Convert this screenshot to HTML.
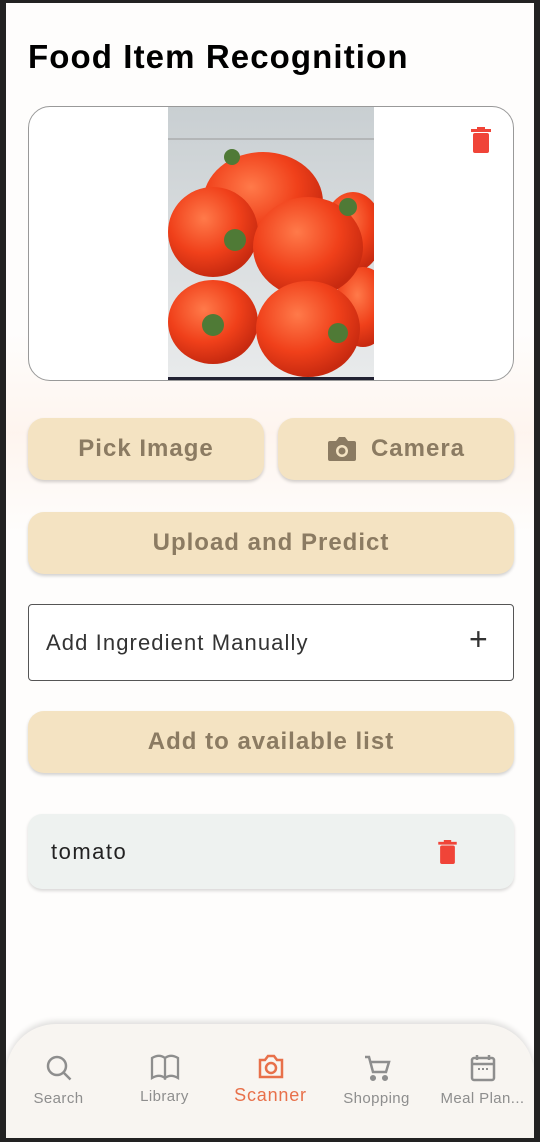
<!DOCTYPE html>
<html><head><meta charset="utf-8"><style>
*{margin:0;padding:0;box-sizing:border-box}
body{width:540px;height:1142px;background:#222;position:relative;overflow:hidden;font-family:"Liberation Sans",sans-serif}
.scr{position:absolute;left:6px;top:3px;width:528px;height:1135px;background:#fefdfc;overflow:hidden}
.abs{position:absolute}
h1{position:absolute;left:22px;top:35px;font-size:33px;font-weight:bold;color:#000;letter-spacing:1.1px;white-space:nowrap}
.btn{position:absolute;background:#f4e3c2;border-radius:16px;box-shadow:0 2px 3px rgba(0,0,0,.18);color:#8b7b62;font-weight:bold;font-size:24px;letter-spacing:1px;display:flex;align-items:center;justify-content:center}
.nav{position:absolute;left:0;top:1021px;width:528px;height:120px;background:#f8f5f1;border-radius:50px 50px 0 0;box-shadow:0 -3px 6px rgba(0,0,0,.12)}
.it{position:absolute;top:0;width:105px;text-align:center;color:#8e8e8e;font-size:15px;letter-spacing:.4px;white-space:nowrap}
.it svg{display:block;margin:30px auto 0}
.it span{display:block;margin-top:8px}
</style></head><body>
<div class="scr">
<div class="abs" style="left:0;top:330px;width:528px;height:200px;background:linear-gradient(180deg,rgba(255,240,225,0) 0%,rgba(253,236,225,.5) 50%,rgba(255,240,225,0) 100%)"></div>
<h1>Food Item Recognition</h1>
<div class="abs" style="left:22px;top:103px;width:486px;height:275px;border:1.5px solid #999;border-radius:22px;overflow:hidden;background:#fff">
 <svg class="abs" style="left:139px;top:0" width="206" height="275" viewBox="0 0 206 275">
  <defs><radialGradient id="t" cx=".4" cy=".35" r=".65"><stop offset="0" stop-color="#ff7a4a"/><stop offset=".6" stop-color="#f0401a"/><stop offset="1" stop-color="#c82a10"/></radialGradient>
  <linearGradient id="bg" x1="0" y1="0" x2="0" y2="1"><stop offset="0" stop-color="#c9cfd2"/><stop offset="1" stop-color="#e9ebec"/></linearGradient></defs>
  <rect width="206" height="275" fill="url(#bg)"/>
  <line x1="0" y1="32" x2="206" y2="32" stroke="#999" stroke-width="1"/>
  <ellipse cx="95" cy="95" rx="60" ry="50" fill="url(#t)"/>
  <ellipse cx="185" cy="125" rx="30" ry="40" fill="url(#t)"/>
  <ellipse cx="195" cy="200" rx="28" ry="40" fill="url(#t)"/>
  <ellipse cx="45" cy="125" rx="45" ry="45" fill="url(#t)"/>
  <ellipse cx="140" cy="140" rx="55" ry="50" fill="url(#t)"/>
  <ellipse cx="45" cy="215" rx="45" ry="42" fill="url(#t)"/>
  <ellipse cx="140" cy="222" rx="52" ry="48" fill="url(#t)"/>
  <g fill="#4f7a36"><circle cx="64" cy="50" r="8"/><circle cx="67" cy="133" r="11"/><circle cx="180" cy="100" r="9"/><circle cx="45" cy="218" r="11"/><circle cx="170" cy="226" r="10"/></g>
  <rect y="270" width="206" height="5" fill="#223"/>
 </svg>
 <svg class="abs" style="left:442px;top:20px" width="20" height="26" viewBox="0 0 20 26"><rect x="0" y="2" width="20" height="3" fill="#f04438"/><rect x="6" y="0" width="8" height="3" fill="#f04438"/><rect x="2" y="6" width="16" height="20" rx="2" fill="#f04438"/></svg>
</div>
<div class="btn" style="left:22px;top:415px;width:236px;height:62px">Pick Image</div>
<div class="btn" style="left:272px;top:415px;width:236px;height:62px"><svg width="30" height="26" viewBox="0 0 30 26" style="margin-right:14px"><path d="M3 5h6l3-4h6l3 4h6a2 2 0 0 1 2 2v16a2 2 0 0 1-2 2H3a2 2 0 0 1-2-2V7a2 2 0 0 1 2-2z" fill="#8b7b62"/><circle cx="15" cy="15" r="6" fill="#f4e3c2"/><circle cx="15" cy="15" r="3.5" fill="#8b7b62"/></svg>Camera</div>
<div class="btn" style="left:22px;top:509px;width:486px;height:62px">Upload and Predict</div>
<div class="abs" style="left:22px;top:601px;width:486px;height:77px;border:1.2px solid #555;border-radius:4px;background:#fff">
 <div class="abs" style="left:17px;top:25px;font-size:22px;color:#333;letter-spacing:1.1px;white-space:nowrap">Add Ingredient Manually</div>
 <div class="abs" style="left:440px;top:16px;font-size:32px;color:#333;font-weight:300">+</div>
</div>
<div class="btn" style="left:22px;top:708px;width:486px;height:62px">Add to available list</div>
<div class="abs" style="left:22px;top:811px;width:486px;height:75px;background:#eef2f0;border-radius:14px;box-shadow:0 2px 3px rgba(0,0,0,.15)">
 <div class="abs" style="left:23px;top:25px;font-size:22px;color:#222;letter-spacing:1.5px">tomato</div>
 <svg class="abs" style="left:410px;top:26px" width="19" height="24" viewBox="0 0 20 26"><rect x="0" y="2" width="20" height="3" fill="#f04438"/><rect x="6" y="0" width="8" height="3" fill="#f04438"/><rect x="2" y="6" width="16" height="20" rx="2" fill="#f04438"/></svg>
</div>
<div class="nav">
 <div class="it" style="left:0"><svg width="28" height="28" viewBox="0 0 28 28" fill="none" stroke="#8e8e8e" stroke-width="2.5"><circle cx="12" cy="12" r="9"/><path d="M18.5 18.5l7 7"/></svg><span>Search</span></div>
 <div class="it" style="left:106px"><svg width="30" height="26" viewBox="0 0 30 26" fill="none" stroke="#8e8e8e" stroke-width="2.3"><path d="M2 4c5-3 9-3 13 0v20c-4-3-8-3-13 0zM28 4c-5-3-9-3-13 0v20c4-3 8-3 13 0z"/></svg><span>Library</span></div>
 <div class="it" style="left:212px;color:#e8704a;font-size:18px;letter-spacing:.8px"><svg width="28" height="26" viewBox="0 0 28 26" fill="none" stroke="#e8704a" stroke-width="2.5"><path d="M3 6h5l3-4h6l3 4h5v17H3z"/><circle cx="14" cy="14" r="5"/></svg><span style="margin-top:5px">Scanner</span></div>
 <div class="it" style="left:318px"><svg width="28" height="28" viewBox="0 0 28 28" fill="none" stroke="#8e8e8e" stroke-width="2.5"><path d="M2 3h4l4 15h13l3-10H8"/><circle cx="10" cy="24" r="1.8" fill="#8e8e8e"/><circle cx="22" cy="24" r="1.8" fill="#8e8e8e"/></svg><span>Shopping</span></div>
 <div class="it" style="left:424px"><svg width="26" height="28" viewBox="0 0 26 28" fill="none" stroke="#8e8e8e" stroke-width="2.5"><rect x="2" y="4" width="22" height="22" rx="2"/><path d="M2 10h22M7 1v5M19 1v5"/><path d="M8 15h2M12 15h2M16 15h2" stroke-width="2"/></svg><span>Meal Plan...</span></div>
</div>
</div>
</body></html>
